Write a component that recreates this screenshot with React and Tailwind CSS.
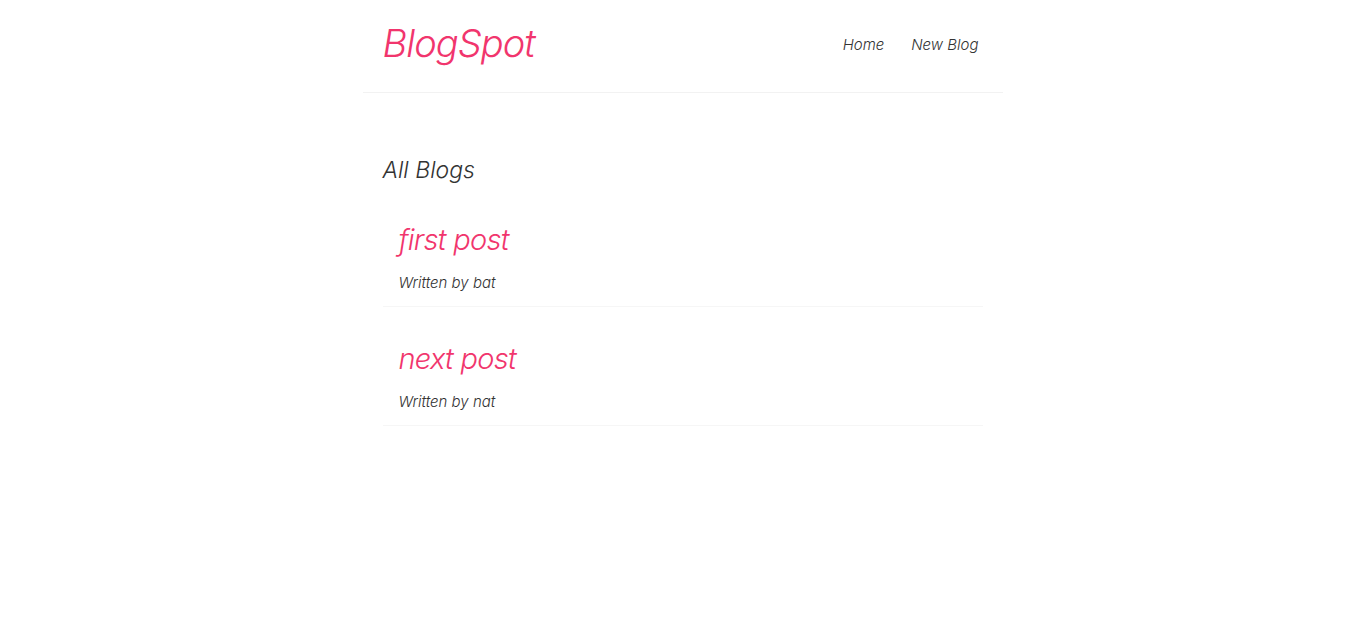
export default function App() {
  const blogs = [
    { id: 1, title: 'first post', author: 'bat' },
    { id: 2, title: 'next post', author: 'nat' },
  ];

  return (
    <div className="min-h-screen bg-white italic text-[#333]" style={{ fontFamily: 'Inter, "Open Sans", sans-serif' }}>
      {/* Navbar */}
      <nav className="mx-auto flex h-[93px] w-[640px] items-center border-b border-[#f2f2f2] px-5 pb-[5px]">
        <h1 className="text-[38px] font-light tracking-tight text-[#f1356d]">BlogSpot</h1>
        <div className="ml-auto flex gap-[27px] pr-1 pt-[4px] text-[15px] font-light">
          <a href="#">Home</a>
          <a href="#">New Blog</a>
        </div>
      </nav>

      {/* Content */}
      <div className="mx-auto mt-[60px] w-[640px] px-5">
        <h2 className="text-[23px] font-light">All Blogs</h2>
        {blogs.map((blog) => (
          <div key={blog.id} className="mt-[30px] border-b border-[#f6f6f6] px-4 pb-[11px]">
            <h2 className="mb-[11px] text-[29px] font-light tracking-tight text-[#f1356d]">{blog.title}</h2>
            <p className="text-[15px] font-light">Written by {blog.author}</p>
          </div>
        ))}
      </div>
    </div>
  );
}
